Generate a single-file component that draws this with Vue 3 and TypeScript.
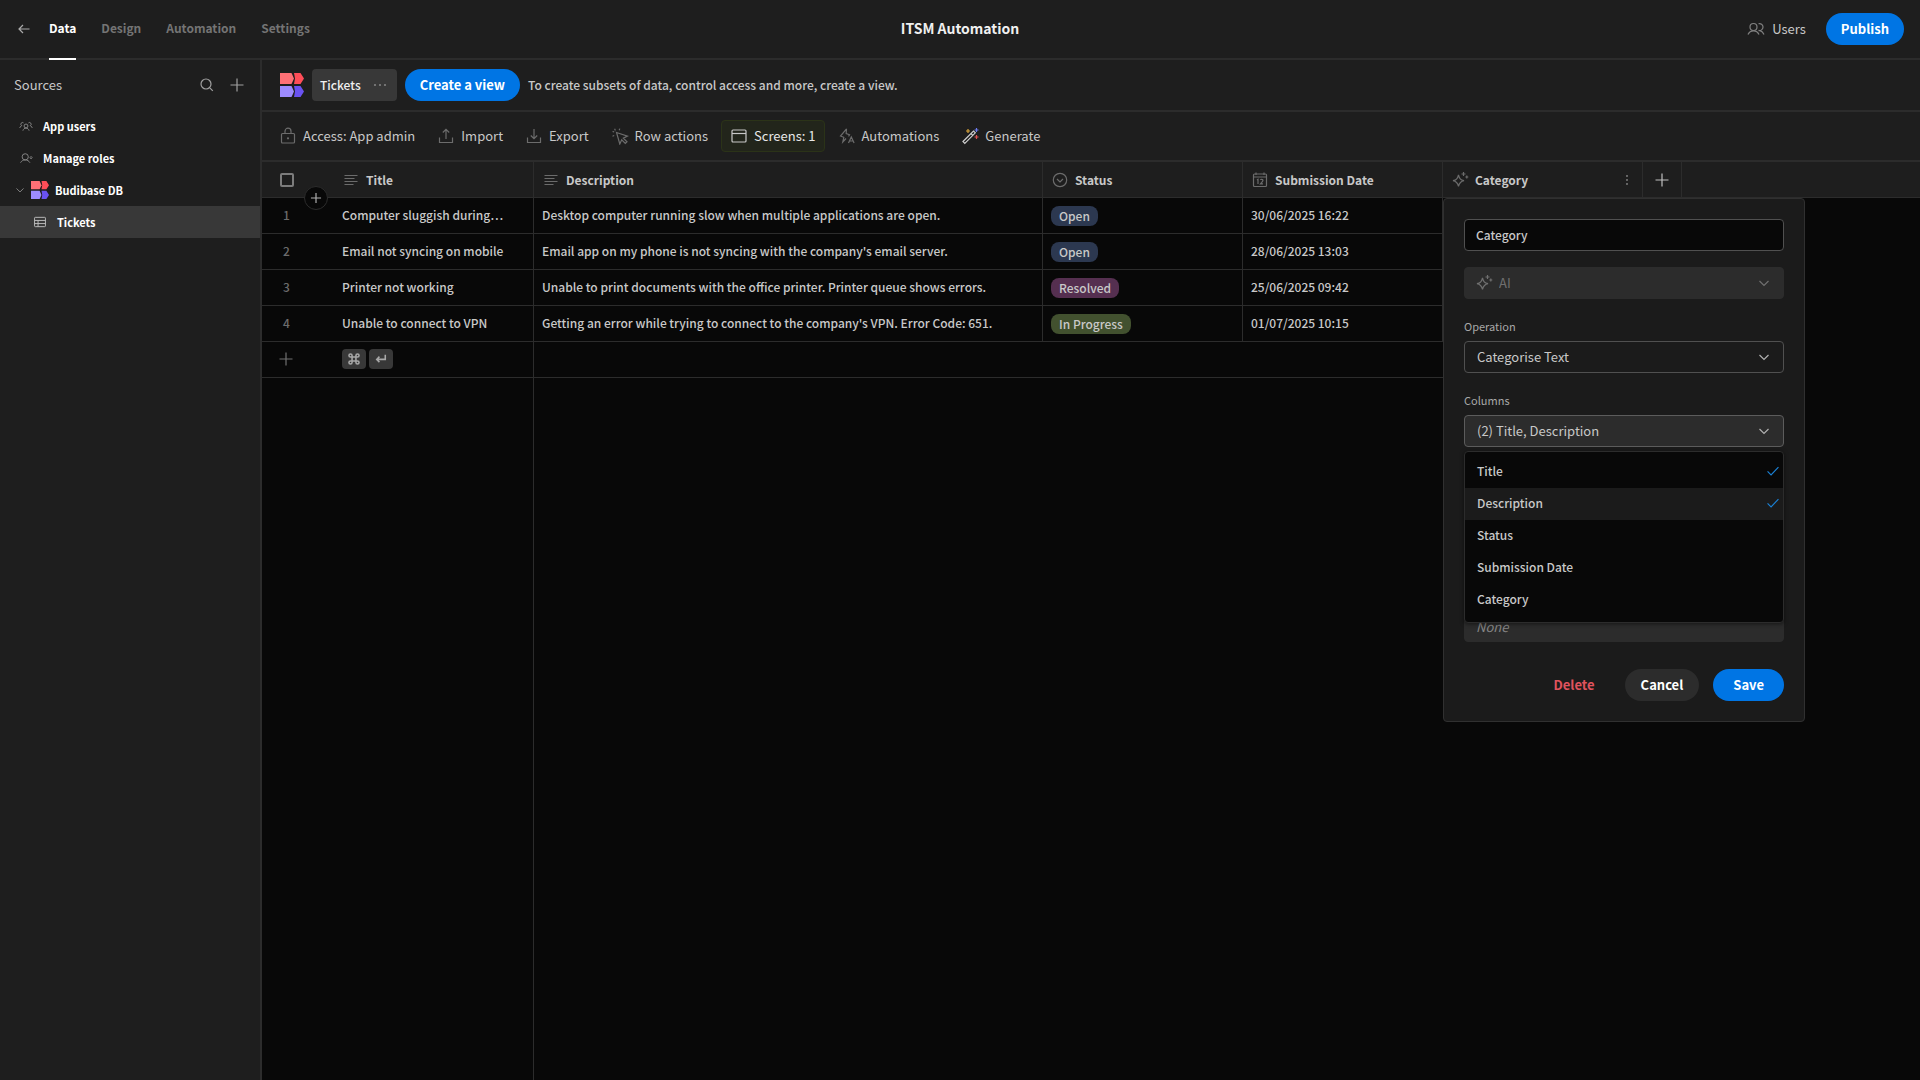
<script setup lang="ts">
import { computed, h, ref, type FunctionalComponent } from 'vue'

const shapes: Record<string, string> = {
  back: '<path d="M14.5 9H4M8 5 4 9l4 4"/>',
  search: '<circle cx="8" cy="8" r="5"/><path d="m11.800 11.800 3 3"/>',
  plus: '<path d="M9 2.500v13M2.500 9h13"/>',
  appUsers:
    '<circle cx="9" cy="9" r="2.500"/><path d="M5 15c.6-2.200 2.200-3.300 4-3.300s3.400 1.100 4 3.300M3.200 8.300A2 2 0 1 1 5.800 5M1 11.500c.5-1.800 1.500-2.800 3-3M14.800 8.300A2 2 0 1 0 12.200 5M17 11.500c-.5-1.800-1.500-2.800-3-3"/>',
  roles: '<circle cx="8" cy="7.500" r="4"/><path d="M2 15c1.200-2.200 3.200-3.500 6-3.500s4.800 1.300 6 3.500M14 8.500l1.500-1.500L17 8.500 15.500 10z"/>',
  chevron: '<path d="m4.500 7 4.500 4.500L13.500 7"/>',
  table: '<rect x="2" y="3" width="14" height="12" rx="1"/><path d="M2 7h14M2 11h14M6.500 7v8"/>',
  lock: '<rect x="2.500" y="6.500" width="13" height="9.500" rx="1"/><path d="M6 6.500V4.200a3 3 0 0 1 6 0v2.300"/><circle cx="9" cy="11.300" r=".5"/>',
  upload: '<path d="M9 12V2.500M5.800 5.500 9 2.300l3.200 3.200M2.500 10.500v5h13v-5"/>',
  download: '<path d="M9 2v9.500M5.800 8.500 9 11.700l3.200-3.200M2.500 10.500v5h13v-5"/>',
  click: '<path d="m5.500 5.500 11 3.600-4.200 2 3.700 3.700-1.700 1.700-3.600-3.700-1.900 4.200zM4.400 3.400 3.600 1.800M8.200 3.300l.6-1.700M3.200 5 1.600 4.400M3.200 8.500l-1.700.7"/>',
  screen: '<rect x="2" y="3" width="14" height="12" rx="1"/><path d="M2 6.500h14"/>',
  automation: '<path d="m8.500 1.800-6 7.200 3.300 1.300-1 4.700 3.200-3.500M8.500 1.800l-.3 4.700 3.300 1.300-1 1.500M10.500 16l2.800-6 2.800 6M11.500 14h3.600"/>',
  wand:
    '<path stroke="#cfcfcf" d="M2 14.500 12.500 4l1.800 1.800L3.800 16.300zM10 6.500l1.800 1.800"/><path stroke="#d9a43b" d="M7 2v4M5 4h4"/><path stroke="#6d7cf0" d="M15.500 1v4M13.500 3h4"/><path stroke="#e0504f" d="M15.500 8v4M13.500 10h4"/>',
  text: '<path d="M2.500 4.500h13M2.500 7.500h10M2.500 10.500h13M2.500 13.500h9"/>',
  options: '<circle cx="9" cy="9" r="6.700"/><path d="m6 8 3 3 3-3"/>',
  calendar:
    '<rect x="2.500" y="3" width="13" height="12.500" rx="1"/><path d="M2.500 6h13M5 1.500V4M13 1.500V4M6 9l1-.7V13M9.500 9c.2-1 2.500-1 2.500.3 0 1-1.200 2-2.500 3.500H12"/>',
  spark: '<path d="M7.500 4c.9 3.800 2 5 5.500 5.700-3.500.7-4.600 1.900-5.500 5.600-.9-3.700-2-4.900-5.500-5.600C5.500 9 6.600 7.800 7.500 4zM12.500 1v4M10.500 3h4M15.800 4.500v3M14.300 6h3"/>',
  users:
    '<circle cx="6.500" cy="7" r="3.500"/><path d="M1 14.500c1-2.300 3-3.700 5.500-3.700s4.500 1.400 5.500 3.700M11.500 3.700a3.500 3.500 0 1 1 0 6.700M13 10.700c1.800.4 3.200 1.800 4 3.800"/>',
  more: '<circle cx="4" cy="9" r=".5"/><circle cx="9" cy="9" r=".5"/><circle cx="14" cy="9" r=".5"/>',
  moreVertical: '<circle cx="9" cy="5" r=".3"/><circle cx="9" cy="9" r=".3"/><circle cx="9" cy="13" r=".3"/>',
  check: '<path d="m2 9.500 4.500 4.500L16 4"/>',
  command:
    '<path d="M6.500 6.500h5v5h-5zM6.500 6.500h-2a2 2 0 1 1 2-2zM11.500 6.500v-2a2 2 0 1 1 2 2zM11.500 11.500h2a2 2 0 1 1-2 2zM6.500 11.500v2a2 2 0 1 1-2-2z"/>',
  enter: '<path d="M14.500 3.500v6H4M7 6 3.500 9.500 7 13"/>',
}

const Icon: FunctionalComponent<{ name: string }> = (props) =>
  h('svg', { class: 'icon', viewBox: '0 0 18 18', 'aria-hidden': 'true', innerHTML: shapes[props.name] })
Icon.props = ['name']

const Logo: FunctionalComponent = () =>
  h('svg', {
    class: 'logo',
    viewBox: '0 0 24 24',
    'aria-hidden': 'true',
    innerHTML:
      '<path fill="#ff7076" d="M0 0h11.500L14 5.500 11.500 11H0z"/><path fill="#ff4d58" d="M14 0h6.500L24 5.500 20.500 11H14l1-5.500z"/>' +
      '<path fill="#9d8bff" d="M0 13h11.500l2.500 5.500-2.500 5.500H0z"/><path fill="#6a52f2" d="M14 13h6.500l3.500 5.500-3.500 5.500H14l1-5.500z"/>',
  })

const tabs = ['Data', 'Design', 'Automation', 'Settings']
const tools = [
  { icon: 'lock', label: 'Access: App admin' },
  { icon: 'upload', label: 'Import' },
  { icon: 'download', label: 'Export' },
  { icon: 'click', label: 'Row actions' },
  { icon: 'screen', label: 'Screens: 1', active: true },
  { icon: 'automation', label: 'Automations' },
  { icon: 'wand', label: 'Generate' },
]
const rows = [
  { title: 'Computer sluggish during…', description: 'Desktop computer running slow when multiple applications are open.', status: 'Open', tone: 'blue', date: '30/06/2025 16:22' },
  { title: 'Email not syncing on mobile', description: "Email app on my phone is not syncing with the company's email server.", status: 'Open', tone: 'blue', date: '28/06/2025 13:03' },
  { title: 'Printer not working', description: 'Unable to print documents with the office printer. Printer queue shows errors.', status: 'Resolved', tone: 'plum', date: '25/06/2025 09:42' },
  { title: 'Unable to connect to VPN', description: "Getting an error while trying to connect to the company's VPN. Error Code: 651.", status: 'In Progress', tone: 'green', date: '01/07/2025 10:15' },
]
const choices = ['Title', 'Description', 'Status', 'Submission Date', 'Category']
const picked = ref<string[]>(['Title', 'Description'])
const columnName = ref('Category')
const menuOpen = ref(true)
const summary = computed(() => `(${picked.value.length}) ${picked.value.join(', ')}`)
</script>

<template>
  <div class="app">
    <header class="top">
      <div class="top-left">
        <button class="plain back" aria-label="Back"><Icon name="back" /></button>
        <nav class="tabs">
          <a v-for="(tab, i) in tabs" :key="tab" href="#" :class="{ current: i === 0 }">{{ tab }}</a>
        </nav>
      </div>
      <h1>ITSM Automation</h1>
      <div class="top-right">
        <a class="users" href="#"><Icon name="users" />Users</a>
        <button class="pill primary">Publish</button>
      </div>
    </header>

    <div class="body">
      <aside class="side">
        <div class="side-head">
          <h2>Sources</h2>
          <button class="plain" aria-label="Search"><Icon name="search" /></button>
          <button class="plain add" aria-label="Add source"><Icon name="plus" /></button>
        </div>
        <nav class="tree">
          <a href="#" class="leaf"><Icon name="appUsers" />App users</a>
          <a href="#" class="leaf"><Icon name="roles" />Manage roles</a>
          <a href="#" class="source"><Icon name="chevron" /><Logo />Budibase DB</a>
          <a href="#" class="child"><Icon name="table" />Tickets</a>
        </nav>
      </aside>

      <main class="main">
        <div class="views">
          <Logo />
          <button class="view">Tickets<Icon name="more" /></button>
          <button class="pill primary">Create a view</button>
          <p>To create subsets of data, control access and more, create a view.</p>
        </div>
        <div class="tools">
          <button v-for="tool in tools" :key="tool.label" class="tool" :class="{ active: tool.active }">
            <Icon :name="tool.icon" />{{ tool.label }}
          </button>
        </div>

        <div class="grid">
          <table>
            <colgroup>
              <col class="c-gutter" /><col class="c-field" /><col class="c-wide" /><col class="c-field" />
              <col class="c-field" /><col class="c-field" /><col class="c-add" /><col />
            </colgroup>
            <thead>
              <tr>
                <th class="gutter open">
                  <input type="checkbox" class="box" aria-label="Select all rows" />
                  <button class="insert" aria-label="Insert row"><Icon name="plus" /></button>
                </th>
                <th><div class="head"><Icon name="text" />Title</div></th>
                <th><div class="head"><Icon name="text" />Description</div></th>
                <th><div class="head"><Icon name="options" />Status</div></th>
                <th><div class="head"><Icon name="calendar" />Submission Date</div></th>
                <th class="anchor">
                  <div class="head"><Icon name="spark" />Category<button class="plain dots" aria-label="Column menu"><Icon name="moreVertical" /></button></div>
                  <form class="popover" @submit.prevent>
                    <input v-model="columnName" class="control name" type="text" aria-label="Column name" />
                    <div class="control picker disabled">
                      <Icon name="spark" />
                      <select disabled aria-label="Type"><option>AI</option></select>
                      <Icon name="chevron" class="arrow" />
                    </div>
                    <label class="caption" for="operation">Operation</label>
                    <div class="control picker">
                      <select id="operation"><option>Categorise Text</option></select>
                      <Icon name="chevron" class="arrow" />
                    </div>
                    <label class="caption" for="columns">Columns</label>
                    <div class="control picker opened">
                      <select id="columns" @mousedown.prevent="menuOpen = !menuOpen"><option>{{ summary }}</option></select>
                      <Icon name="chevron" class="arrow" />
                      <div v-if="menuOpen" class="menu">
                        <label v-for="choice in choices" :key="choice" :class="{ hover: choice === 'Description' }">
                          {{ choice }}
                          <input v-model="picked" type="checkbox" :value="choice" />
                          <Icon v-if="picked.includes(choice)" name="check" />
                        </label>
                      </div>
                    </div>
                    <input class="control none" type="text" placeholder="None" aria-label="Default value" disabled />
                    <div class="actions">
                      <button type="button" class="pill danger">Delete</button>
                      <button type="button" class="pill quiet">Cancel</button>
                      <button type="submit" class="pill primary save">Save</button>
                    </div>
                  </form>
                </th>
                <th class="add-col"><button class="plain" aria-label="Add column"><Icon name="plus" /></button></th>
                <th class="open"></th>
              </tr>
            </thead>
            <tbody>
              <tr v-for="(row, i) in rows" :key="row.title">
                <td class="gutter open">{{ i + 1 }}</td>
                <td>{{ row.title }}</td>
                <td>{{ row.description }}</td>
                <td><span class="tag" :class="row.tone">{{ row.status }}</span></td>
                <td>{{ row.date }}</td>
                <td></td>
              </tr>
              <tr class="new">
                <td class="gutter open"><button class="plain" aria-label="Add row"><Icon name="plus" /></button></td>
                <td><div class="keys"><kbd><Icon name="command" /></kbd><kbd><Icon name="enter" /></kbd></div></td>
                <td colspan="4" class="open"></td>
              </tr>
            </tbody>
          </table>
          <div class="rest"></div>
        </div>
      </main>
    </div>
  </div>
</template>

<style>
body {
  background: #080808;
}
</style>

<style scoped>
.app {
  --panel: #1e1e1e;
  --line: #2c2c2c;
  --text: #c8c8c8;
  --muted: #6c6c6c;
  --blue: #0075e4;
  min-height: 100vh;
  display: flex;
  flex-direction: column;
  background: #080808;
  color: var(--text);
  font: 500 12px/20px "Noto Sans CJK KR", "Noto Sans", sans-serif;
}
.app * {
  box-sizing: border-box;
}
button,
input,
select {
  font: inherit;
  color: inherit;
  margin: 0;
}
button {
  cursor: pointer;
}
a {
  color: inherit;
  text-decoration: none;
}
h1,
h2,
p {
  margin: 0;
  font: inherit;
}
.icon {
  width: 18px;
  height: 18px;
  flex: none;
  display: block;
  fill: none;
  stroke: currentColor;
  stroke-width: 1.2;
}
.logo {
  width: 24px;
  height: 24px;
  flex: none;
}
.plain {
  padding: 0;
  border: 0;
  background: none;
  display: block;
}
.pill {
  height: 32px;
  padding: 0 16px;
  border: 0;
  border-radius: 16px;
  font-size: 13px;
  font-weight: 700;
  color: #fff;
  white-space: nowrap;
}
.primary {
  padding: 0 15px;
  background: var(--blue);
}

.top {
  display: grid;
  grid-template-columns: 1fr auto 1fr;
  grid-template-rows: 58px;
  height: 60px;
  border-bottom: 2px solid var(--line);
  background: var(--panel);
}
.top-left,
.top-right {
  display: flex;
  align-items: center;
}
.back {
  margin: 0 16px 0 15px;
  color: #aaa;
}
.tabs {
  display: flex;
  align-self: flex-start;
  gap: 25px;
  height: 60px;
}
.tabs a {
  line-height: 56px;
  font-weight: 700;
  color: #747474;
  border-bottom: 2px solid transparent;
}
.tabs .current {
  color: #fff;
  border-color: #fff;
}
.top h1 {
  font-size: 14px;
  font-weight: 700;
  line-height: 56px;
  color: #f0f0f0;
}
.top-right {
  justify-content: flex-end;
  gap: 20px;
  padding-right: 16px;
}
.users {
  display: flex;
  align-items: center;
  gap: 7px;
  font-size: 13px;
  font-weight: 400;
}
.users .icon {
  color: #808080;
}

.body {
  flex: 1;
  display: flex;
}
.side {
  flex: none;
  width: 262px;
  border-right: 2px solid var(--line);
  background: var(--panel);
}
.side-head {
  display: flex;
  align-items: center;
  gap: 12px;
  height: 50px;
  padding: 0 14px;
}
.side-head h2 {
  flex: 1;
  font-size: 13px;
  font-weight: 400;
}
.side-head .icon {
  color: #a0a0a0;
}
.tree {
  color: #fff;
  font-size: 11px;
  font-weight: 700;
}
.tree a {
  display: flex;
  align-items: center;
  height: 32px;
}
.tree .icon {
  width: 14px;
  height: 14px;
  color: #8a8a8a;
}
.tree .leaf {
  gap: 10px;
  padding-left: 19px;
}
.tree .source {
  gap: 4px;
  padding-left: 13px;
}
.tree .source .logo {
  width: 18px;
  height: 18px;
  margin-right: 2px;
}
.tree .child {
  gap: 10px;
  padding-left: 33px;
  background: #383838;
}
.tree .child .icon {
  color: #c0c0c0;
}

.main {
  flex: 1;
  min-width: 0;
  display: flex;
  flex-direction: column;
}
.views,
.tools {
  display: flex;
  align-items: center;
  background: var(--panel);
  border-bottom: 2px solid var(--line);
}
.views {
  height: 52px;
  gap: 8px;
  padding: 0 18px;
}
.view {
  display: flex;
  align-items: center;
  gap: 10px;
  height: 32px;
  padding: 0 8px;
  border: 0;
  border-radius: 4px;
  background: #383838;
  color: #f0f0f0;
}
.view .icon {
  color: #808080;
}
.tools {
  height: 50px;
  gap: 4px;
  padding: 0 8px;
}
.tool {
  display: flex;
  align-items: center;
  gap: 6px;
  height: 32px;
  padding: 0 8px;
  border: 1px solid transparent;
  border-radius: 4px;
  background: none;
  font-size: 13px;
  font-weight: 400;
  white-space: nowrap;
}
.tool .icon {
  color: var(--muted);
}
.tool.active {
  background: #22251b;
  border-color: #2b3318;
  color: #e8e8e8;
}
.tool.active .icon {
  color: #c8c8c8;
}

.grid {
  flex: 1;
  display: flex;
  flex-direction: column;
}
table {
  width: 100%;
  table-layout: fixed;
  border-collapse: separate;
  border-spacing: 0;
}
.c-gutter {
  width: 72px;
}
.c-field {
  width: 200px;
}
.c-wide {
  width: 509px;
}
.c-add {
  width: 39px;
}
th,
td {
  height: 36px;
  padding: 0 8px;
  border: 0 solid var(--line);
  border-width: 0 1px 1px 0;
  text-align: left;
  font-weight: inherit;
}
th {
  background: var(--panel);
}
td {
  padding-bottom: 2px;
  overflow: hidden;
  text-overflow: ellipsis;
  white-space: nowrap;
}
th.open,
td.open {
  border-right-width: 0;
}
.head {
  display: flex;
  align-items: center;
  gap: 6px;
  font-weight: 700;
}
.head > .icon {
  color: var(--muted);
}
.dots {
  margin-left: auto;
  margin-right: -2px;
  color: #909090;
}
.gutter {
  position: relative;
  padding-left: 18px;
  color: var(--muted);
}
td.gutter {
  padding-left: 21px;
}
.new td.gutter {
  padding-left: 15px;
}
.new .icon {
  color: #707070;
}
.box {
  display: block;
  appearance: none;
  width: 14px;
  height: 14px;
  border: 2px solid #7c7c7c;
  border-radius: 2px;
}
.insert {
  position: absolute;
  left: 42px;
  bottom: -13px;
  z-index: 1;
  width: 24px;
  height: 24px;
  padding: 0;
  display: grid;
  place-items: center;
  border: 1px solid var(--line);
  border-radius: 50%;
  background: #080808;
  color: #b0b0b0;
}
.insert .icon {
  width: 14px;
  height: 14px;
  stroke-width: 1.5;
}
.add-col {
  padding: 0 10px;
  color: #c0c0c0;
}
.tag {
  display: inline-block;
  margin-top: 1px;
  padding: 0 8px;
  border-radius: 8px;
  vertical-align: middle;
}
.blue {
  background: #2c3850;
}
.plum {
  background: #552f50;
}
.green {
  background: #42512f;
}
.keys {
  display: flex;
  gap: 3px;
}
kbd {
  width: 24px;
  height: 20px;
  display: grid;
  place-items: center;
  border-radius: 4px;
  background: #383838;
}
kbd .icon {
  width: 14px;
  height: 14px;
  stroke-width: 2;
}
.new kbd .icon {
  color: #a8a8a8;
}
.rest {
  flex: 1;
  width: 272px;
  border-right: 1px solid var(--line);
}

.anchor {
  position: relative;
}
.popover {
  position: absolute;
  top: calc(100% + 1px);
  left: 0;
  z-index: 2;
  width: 362px;
  padding: 20px;
  display: flex;
  flex-direction: column;
  border: 1px solid #303030;
  border-radius: 4px;
  background: #1b1b1b;
}
.control {
  height: 32px;
  border: 1px solid #505050;
  border-radius: 4px;
}
.name {
  padding: 0 11px 2px;
  margin-bottom: 16px;
  background: #080808;
  outline: 0;
}
.picker {
  position: relative;
  display: flex;
  align-items: center;
  font-weight: 400;
}
.picker select {
  flex: 1;
  height: 30px;
  padding: 0 12px;
  border: 0;
  appearance: none;
  background: none;
  outline: 0;
  opacity: 1;
  font-size: 13px;
}
.arrow {
  position: absolute;
  right: 10px;
  pointer-events: none;
  color: #b0b0b0;
}
.disabled {
  padding-left: 10px;
  border-color: #2c2c2c;
  background: #2c2c2c;
  color: #707070;
}
.disabled select {
  padding: 0 6px;
}
.disabled .arrow {
  color: #707070;
}
.opened {
  border-color: #5c5c5c;
  background: #2c2c2c;
}
.caption {
  margin-top: 18px;
  height: 24px;
  line-height: 18px;
  font-size: 11px;
  font-weight: 400;
  color: #a8a8a8;
}
.menu {
  position: absolute;
  top: 35px;
  left: -1px;
  right: -1px;
  z-index: 1;
  padding: 4px 0 6px;
  border: 1px solid #2c2c2c;
  border-radius: 4px;
  background: #080808;
  box-shadow: 0 1px 4px #0008;
  font-weight: 500;
}
.menu label {
  display: flex;
  align-items: center;
  height: 32px;
  padding: 0 3px 2px 12px;
}
.menu .hover {
  background: #1b1b1b;
}
.menu input {
  appearance: none;
  margin-left: auto;
}
.menu .icon {
  width: 14px;
  height: 14px;
  stroke-width: 1.500;
  color: #1b82d6;
}
.none {
  margin-top: 163px;
  padding: 0 11px;
  border-color: #2c2c2c;
  background: #2c2c2c;
  font-size: 13px;
}
.none::placeholder {
  color: #858585;
  font-style: italic;
  font-weight: 400;
  opacity: 1;
}
.actions {
  display: flex;
  justify-content: flex-end;
  gap: 14px;
  margin-top: 27px;
}
.danger {
  background: none;
  color: #e0535e;
}
.quiet {
  background: #2c2c2c;
}
.save {
  padding: 0 20px;
}
</style>
